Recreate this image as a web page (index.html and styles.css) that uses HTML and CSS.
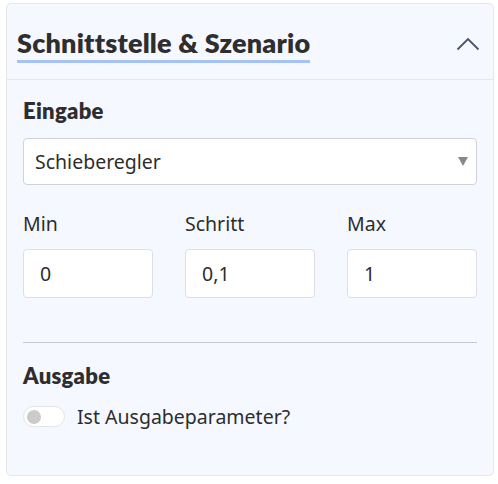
FILE: index.html
```html
<!DOCTYPE html>
<html lang="de">
<head>
<meta charset="utf-8">
<link rel="stylesheet" href="styles.css">
</head>
<body>
<div class="card">
  <div class="card-header">
    <h2 class="title">Schnittstelle &amp; Szenario</h2>
    <svg class="chevron" width="24" height="14" viewBox="0 0 24 14"><path d="M1.5 12.5 L12 2 L22.5 12.5" fill="none" stroke="#4a5568" stroke-width="1.8"/></svg>
  </div>
  <div class="card-body">
    <h3 class="section">Eingabe</h3>
    <div class="select">
      <span>Schieberegler</span>
      <svg class="caret" width="10" height="9" viewBox="0 0 10 9"><path d="M0 0 H10 L5 9 Z" fill="#888"/></svg>
    </div>
    <div class="fields">
      <div class="field"><label>Min</label><div class="input">0</div></div>
      <div class="field"><label>Schritt</label><div class="input">0,1</div></div>
      <div class="field"><label>Max</label><div class="input">1</div></div>
    </div>
    <hr class="divider">
    <h3 class="section">Ausgabe</h3>
    <div class="toggle-row">
      <span class="toggle"><span class="knob"></span></span>
      <span class="toggle-label">Ist Ausgabeparameter?</span>
    </div>
  </div>
</div>
</body>
</html>
```
FILE: styles.css
```css
html, body { margin: 0; padding: 0; background: #ffffff; }
body { font-family: "Noto Sans", "Open Sans", sans-serif; color: #2d2d2d; }
.card {
  margin: 3px 4px 0 6px;
  width: 488px;
  height: 473px;
  box-sizing: border-box;
  border: 1px solid #e3e6ec;
  border-radius: 5px;
  background: #f5f8fe;
}
.card-header {
  height: 75px;
  border-bottom: 1px solid #e3e7ee;
  display: flex;
  align-items: flex-start;
  justify-content: space-between;
  padding: 0 13px 0 10px;
}
.title {
  margin: 24px 0 0 0;
  font-family: "Lato", "DejaVu Sans", sans-serif;
  font-weight: 800;
  font-size: 27px;
  line-height: 30px;
  color: #2e2e30;
  padding-bottom: 2px;
  border-bottom: 3px solid #a4c2f6;
  letter-spacing: 0.2px;
}
.chevron { margin-top: 33px; }
.card-body { padding: 17px 16px 0 16px; }
.section {
  margin: 0;
  font-family: "Lato", "DejaVu Sans", sans-serif;
  font-weight: 800;
  font-size: 22px;
  line-height: 28px;
  letter-spacing: 0.3px;
  color: #2e2e30;
}
.select {
  margin-top: 13px;
  height: 47px;
  box-sizing: border-box;
  border: 1px solid #cfd2d8;
  border-radius: 4px;
  background: #fff;
  display: flex;
  align-items: center;
  justify-content: space-between;
  padding: 0 8px 0 11px;
  font-size: 19.5px;
}
.fields {
  margin-top: 27px;
  display: grid;
  grid-template-columns: 130px 130px 130px;
  column-gap: 32px;
}
.field label { display: block; font-size: 19.5px; line-height: 24px; color: #2d2d2d; }
.input {
  margin-top: 13px;
  height: 49px;
  box-sizing: border-box;
  border: 1px solid #dcdfe4;
  border-radius: 4px;
  background: #fff;
  display: flex;
  align-items: center;
  padding-left: 16px;
  font-size: 19.5px;
}
.divider {
  margin: 44px 0 0 0;
  border: 0;
  border-top: 1px solid #c8cace;
}
.card-body .divider + .section { margin-top: 19px; }
.toggle-row {
  margin-top: 13px;
  display: flex;
  align-items: center;
  gap: 12px;
}
.toggle {
  width: 42px;
  height: 21px;
  box-sizing: border-box;
  border: 1px solid #e2e4e8;
  border-radius: 11px;
  background: #fff;
  display: flex;
  align-items: center;
  padding-left: 3px;
}
.knob { width: 14px; height: 14px; border-radius: 50%; background: #cbcbcb; }
.toggle-label { font-size: 19.5px; color: #2d2d2d; }
```
